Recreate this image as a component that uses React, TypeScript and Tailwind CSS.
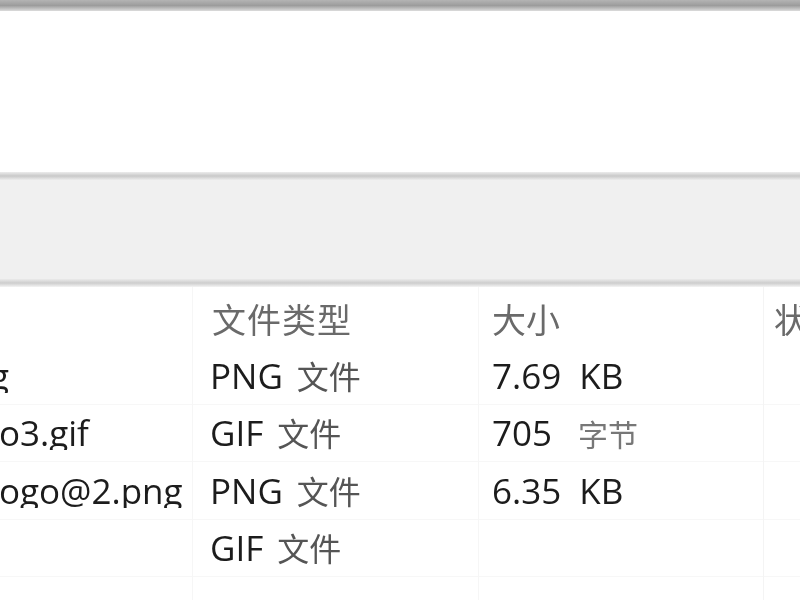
import React from "react";

const rows = [
  { name: "g", nameOffset: "-ml-[10px]", type: "PNG 文件", size: "7.69", unit: "KB", unitCjk: false },
  { name: "o3.gif", nameOffset: "-ml-[1px]", type: "GIF 文件", size: "705", unit: "字节", unitCjk: true },
  { name: "ogo@2.png", nameOffset: "-ml-[1px]", type: "PNG 文件", size: "6.35", unit: "KB", unitCjk: false },
  { name: "", nameOffset: "", type: "GIF 文件", size: "", unit: "", unitCjk: false },
];

export default function App() {
  return (
    <div
      className="w-[800px] h-[600px] overflow-hidden bg-white flex flex-col text-[#1c1c1c]"
      style={{ fontFamily: '"Open Sans", "Noto Sans", "Noto Sans CJK SC", sans-serif' }}
    >
      <div className="h-[11px] shrink-0 bg-gradient-to-b from-[#b4b4b4] via-[#9c9c9c] to-[#dcdcdc]" />
      <div className="h-[161px] shrink-0 bg-white" />
      <div className="h-[8px] shrink-0 bg-gradient-to-b from-[#ececec] via-[#c9c9c9] to-[#ededed]" />
      <div className="h-[99px] shrink-0 bg-[#f0f0f0]" />
      <div className="h-[8px] shrink-0 bg-gradient-to-b from-[#ebebeb] via-[#cdcdcd] to-[#f4f4f4]" />
      <div className="flex-1 relative pt-[3px] blur-[0.5px]">
        <div className="absolute top-0 bottom-0 left-[192px] w-px bg-[#f6f6f6]" />
        <div className="absolute top-0 bottom-0 left-[478px] w-px bg-[#f6f6f6]" />
        <div className="absolute top-0 bottom-0 left-[763px] w-px bg-[#f4f4f4]" />
        <div className="flex h-[57px] items-center text-[34px] text-[#6a6a6a]" style={{ fontFamily: '"Noto Sans CJK SC", sans-serif' }}>
          <div className="w-[212px] shrink-0" />
          <div className="w-[280px] shrink-0 tracking-[1px]">文件类型</div>
          <div className="w-[282px] shrink-0">大小</div>
          <div className="flex-1 overflow-hidden whitespace-nowrap">状态</div>
        </div>
        {rows.map((r, i) => (
          <div key={i} className="flex h-[57.5px] items-center text-[35px] font-medium leading-none border-b border-[#f7f7f7] whitespace-nowrap">
            <div className="w-[210px] shrink-0 overflow-hidden">
              <span className={r.nameOffset + " inline-block"}>{r.name}</span>
            </div>
            <div className="w-[282px] shrink-0">
              {r.type.split(" ")[0]}
              <span className="ml-[14px] text-[32px] font-normal text-[#555]" style={{ fontFamily: '"Noto Sans CJK SC", sans-serif' }}>
                {r.type.split(" ")[1]}
              </span>
            </div>
            <div className="w-[280px] shrink-0">
              {r.size}
              {r.unit && (
                r.unitCjk ? (
                  <span className="ml-[26px] text-[30px] font-normal text-[#777]" style={{ fontFamily: '"Noto Sans CJK SC", sans-serif' }}>{r.unit}</span>
                ) : (
                  <span className="ml-[18px]">{r.unit}</span>
                )
              )}
            </div>
            <div className="flex-1" />
          </div>
        ))}
      </div>
    </div>
  );
}
